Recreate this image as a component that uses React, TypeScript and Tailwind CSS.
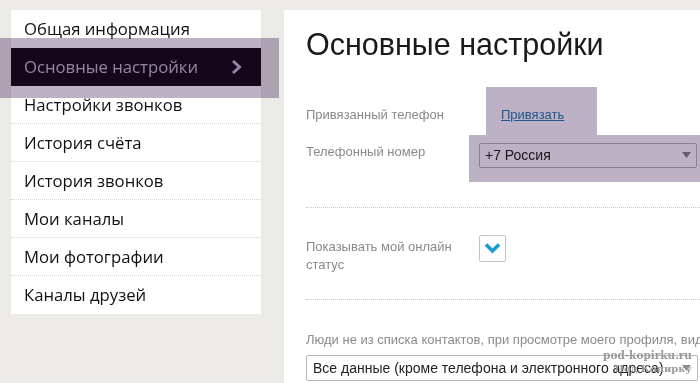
import React from 'react';

const menu = [
  'Общая информация',
  'Основные настройки',
  'Настройки звонков',
  'История счёта',
  'История звонков',
  'Мои каналы',
  'Мои фотографии',
  'Каналы друзей',
];

const Arrow = () => (
  <svg width="9" height="6" viewBox="0 0 9 6" className="shrink-0">
    <polygon points="0,0 9,0 4.5,6" fill="#8a8a8a" />
  </svg>
);

export default function App() {
  return (
    <div className="relative w-[700px] h-[383px] overflow-hidden bg-[#ebeae7] flex gap-[23px] pt-[10px] pl-[11px]">
      <div className="w-[250px] shrink-0 self-start bg-white font-['Open_Sans',sans-serif] text-[16.7px] text-[#111]">
        {menu.map((item, i) => (
          <div
            key={item}
            className={`h-[38px] flex items-center pl-[13px] pr-[19px] ${
              i === 1 ? 'bg-[#1a0920] text-[#cdbdd6] justify-between' : ''
            } ${i > 1 && i < menu.length - 1 ? 'border-b border-dotted border-[#d4d4d4]' : ''}`}
          >
            <span>{item}</span>
            {i === 1 && (
              <svg width="11" height="16" viewBox="0 0 11 16">
                <polyline points="2,2 8.5,8 2,14" fill="none" stroke="#cdbdd6" strokeWidth="3" />
              </svg>
            )}
          </div>
        ))}
      </div>

      <div className="flex-1 bg-white pl-[22px] font-['Liberation_Sans',Arial,sans-serif]">
        <h1 className="text-[30.5px] leading-none text-[#1a1a1a] mt-[19px] mb-[45px]">Основные настройки</h1>

        <div className="flex items-center h-[20px] text-[13px]">
          <span className="w-[195px] text-[#8a8a8a]">Привязанный телефон</span>
          <span className="text-[#2b7bb5] underline">Привязать</span>
        </div>
        <div className="flex items-start mt-[12px] text-[13px]">
          <span className="w-[173px] text-[#8a8a8a] pt-[5px]">Телефонный номер</span>
          <div className="mt-[6px] w-[218px] h-[25px] border border-[#b9b9b9] rounded-[2px] flex items-center justify-between pl-[5px] pr-[5px] text-[14px] text-[#222] bg-white">
            <span>+7 Россия</span>
            <Arrow />
          </div>
        </div>

        <div className="mt-[39px] border-t border-dotted border-[#c8c8c8]" />

        <div className="flex items-start mt-[28px] text-[13px]">
          <span className="w-[173px] text-[#8a8a8a] leading-[18px] pt-[2px]">
            Показывать мой онлайн
            <br />
            статус
          </span>
          <div className="-mt-[1px] w-[27px] h-[27px] border border-[#c4c4c4] rounded-[2px] flex items-center justify-center bg-white">
            <svg width="17" height="12" viewBox="0 0 17 12">
              <polyline points="2,2.5 8.5,9 15,2.5" fill="none" stroke="#1a9ad0" strokeWidth="3.6" />
            </svg>
          </div>
        </div>

        <div className="mt-[25px] border-t border-dotted border-[#c8c8c8]" />

        <div className="mt-[30px] text-[13px] text-[#8a8a8a] whitespace-nowrap">
          Люди не из списка контактов, при просмотре моего профиля, видят
        </div>
        <div className="mt-[6px] w-[392px] h-[26px] border border-[#b9b9b9] rounded-[2px] flex items-center justify-between pl-[6px] pr-[6px] text-[14px] text-[#222]">
          <span>Все данные (кроме телефона и электронного адреса)</span>
          <Arrow />
        </div>
      </div>

      {/* highlight boxes drawn over the screenshot */}
      <div className="absolute left-0 top-[38px] w-[279px] h-[60px] bg-[#bdb1c5] mix-blend-multiply" />
      <div className="absolute left-[486px] top-[87px] w-[111px] h-[48px] bg-[#bdb1c5] mix-blend-multiply" />
      <div className="absolute left-[469px] top-[135px] w-[231px] h-[47px] bg-[#bdb1c5] mix-blend-multiply" />

      <div className="absolute right-[8px] bottom-[8px] text-right font-['DejaVu_Serif',serif] font-bold text-[#9a9a9a] leading-[13px]">
        <div className="text-[10.5px]">pod-kopirku.ru</div>
        <div className="text-[10px]">Под Копирку</div>
      </div>
    </div>
  );
}
